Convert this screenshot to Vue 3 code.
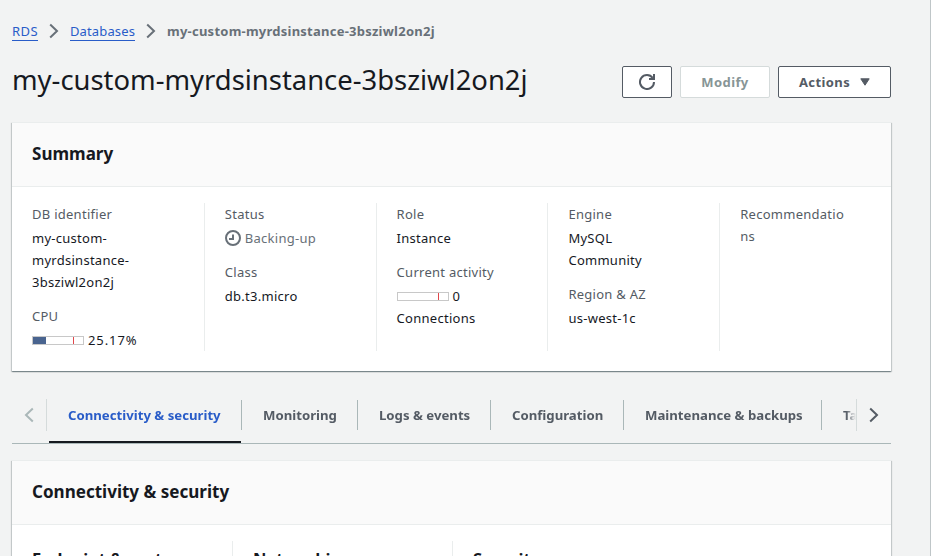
<script setup>
const instance = 'my-custom-myrdsinstance-3bsziwl2on2j'

const summary = [
  [
    { label: 'DB identifier', lines: ['my-custom-', 'myrdsinstance-', '3bsziwl2on2j'] },
    { label: 'CPU', meter: 26, lines: ['25.17%'], wide: true },
  ],
  [
    { label: 'Status', pending: true, lines: ['Backing-up'] },
    { label: 'Class', lines: ['db.t3.micro'] },
  ],
  [
    { label: 'Role', lines: ['Instance'] },
    { label: 'Current activity', meter: 0, lines: ['0', 'Connections'] },
  ],
  [
    { label: 'Engine', lines: ['MySQL', 'Community'] },
    { label: 'Region & AZ', lines: ['us-west-1c'] },
  ],
  [{ label: 'Recommendatio\nns', lines: [] }],
]

const tabs = [
  'Connectivity & security',
  'Monitoring',
  'Logs & events',
  'Configuration',
  'Maintenance & backups',
  'Tags',
]

const details = ['Endpoint & port', 'Networking', 'Security']
</script>

<template>
  <main class="page">
    <nav class="crumbs">
      <a class="link">RDS</a>
      <svg class="chevron" viewBox="0 0 10 16"><path d="M1.200 1.500 8 8l-6.800 6.500" /></svg>
      <a class="link">Databases</a>
      <svg class="chevron" viewBox="0 0 10 16"><path d="M1.200 1.500 8 8l-6.800 6.500" /></svg>
      <span class="current">{{ instance }}</span>
    </nav>

    <header class="heading">
      <h1>{{ instance }}</h1>
      <div class="actions">
        <button class="btn refresh" aria-label="Refresh">
          <svg viewBox="0 0 16 16" width="16" height="16">
            <path d="M10 5h5V0" />
            <path d="M15 8a7 7 0 1 1-1.300-4.060" />
          </svg>
        </button>
        <button class="btn modify" disabled>Modify</button>
        <button class="btn menu">
          Actions
          <svg viewBox="0 0 10 8" width="10" height="8"><path d="M.8.800h8.400L5 7.200z" /></svg>
        </button>
      </div>
    </header>

    <section class="box">
      <h2>Summary</h2>
      <div class="summary">
        <div v-for="(col, i) in summary" :key="i" class="col">
          <div v-for="item in col" :key="item.label" class="field">
            <div class="label">{{ item.label }}</div>
            <div v-if="item.lines.length" class="value" :class="{ pending: item.pending }">
              <div v-for="(line, n) in item.lines" :key="line" class="line" :class="{ wide: item.wide }">
                <svg v-if="item.pending" class="clock" viewBox="0 0 16 16" width="16" height="16">
                  <circle cx="8" cy="8" r="7" />
                  <path d="M8 4.500V9H4" />
                </svg>
                <span v-if="item.meter !== undefined && n === 0" class="meter">
                  <span class="fill" :style="{ width: item.meter + '%' }"></span>
                  <span class="limit"></span>
                </span>
                <span>{{ line }}</span>
              </div>
            </div>
          </div>
        </div>
      </div>
    </section>

    <div class="tabbar">
      <div class="scroll prev">
        <svg class="chevron" viewBox="0 0 10 16"><path d="M8.800 1.500 2 8l6.800 6.500" /></svg>
      </div>
      <div class="tabs">
        <div v-for="(tab, i) in tabs" :key="tab" class="tab" :class="{ active: i === 0 }">
          <span>{{ tab }}</span>
        </div>
      </div>
      <div class="scroll next">
        <svg class="chevron" viewBox="0 0 10 16"><path d="M1.200 1.500 8 8l-6.800 6.500" /></svg>
      </div>
    </div>

    <section class="box">
      <h2>Connectivity &amp; security</h2>
      <div class="details">
        <h3 v-for="d in details" :key="d">{{ d }}</h3>
      </div>
    </section>
  </main>
</template>

<style>
body {
  background: #fff;
  overflow: hidden;
}
</style>

<style scoped>
.page {
  box-sizing: border-box;
  width: 931px;
  height: 556px;
  overflow: hidden;
  padding: 20px 39px 0 12px;
  border-right: 1px solid #bfc6c8;
  background: #f2f3f3;
  color: #16191f;
  font: 13px/22px "Noto Sans", sans-serif;
  letter-spacing: 0.27px;
}
h1,
h2,
h3 {
  margin: 0;
  letter-spacing: 0;
}
svg {
  display: block;
  flex: none;
  fill: none;
  stroke: currentColor;
  stroke-width: 2;
}
.chevron {
  width: 10px;
  height: 16px;
}
.crumbs {
  display: flex;
  height: 22px;
  color: #687078;
  letter-spacing: 0;
}
.crumbs .chevron {
  margin: 3px 11px 0;
}
.link {
  box-sizing: border-box;
  height: 21px;
  border-bottom: 1px solid #295cc8;
  color: #295cc8;
  letter-spacing: 0.130px;
}
.link:first-child {
  width: 26px;
  letter-spacing: 0.4px;
}
.link:nth-of-type(2) {
  width: 65px;
}
.current {
  font-weight: 700;
  letter-spacing: 0.24px;
}
.heading {
  display: flex;
  justify-content: space-between;
  height: 61px;
  margin-top: 19px;
}
h1 {
  padding-top: 1px;
  font-size: 27.4px;
  font-weight: 400;
  line-height: 36px;
}
.actions {
  display: flex;
  gap: 8px;
  margin: 5px 0 0;
}
.btn {
  display: flex;
  align-items: center;
  justify-content: center;
  box-sizing: border-box;
  height: 32px;
  padding: 0;
  border: 1px solid #545b64;
  border-radius: 2px;
  background: #fff;
  color: #545b64;
  font: 700 13px/20px "Noto Sans", sans-serif;
  letter-spacing: 0.4px;
}
.refresh {
  width: 50px;
}
.modify {
  width: 90px;
  border-color: #d5dbdb;
  color: #879596;
}
.menu {
  gap: 10px;
  width: 113px;
}
.menu svg {
  fill: currentColor;
  stroke-width: 1;
  stroke-linejoin: round;
}
.box {
  width: 879px;
  border-top: 1px solid #eaeded;
  background: #fff;
  box-shadow:
    0 1px 1px 0 rgba(0, 28, 36, 0.3),
    1px 1px 1px 0 rgba(0, 28, 36, 0.15),
    -1px 1px 1px 0 rgba(0, 28, 36, 0.15);
}
h2 {
  box-sizing: border-box;
  height: 64px;
  padding: 21px 20px 0;
  border-bottom: 1px solid #eaeded;
  background: #fafafa;
  font-size: 17.05px;
  line-height: 20px;
}
.summary {
  display: grid;
  grid-template-columns: repeat(5, 1fr);
  padding: 16px 0 20px 20px;
}
.col {
  display: flex;
  flex-direction: column;
  gap: 12px;
  padding: 0 20px;
  border-left: 1px solid #eaeded;
  white-space: nowrap;
}
.col:first-child {
  padding-left: 0;
  border-left: 0;
}
.label {
  color: #545b64;
  white-space: pre-line;
}
.value {
  margin-top: 2px;
}
.pending {
  color: #687078;
}
.line {
  display: flex;
  gap: 4px;
  height: 22px;
}
.wide {
  letter-spacing: 0.9px;
}
.clock {
  margin-top: 3px;
}
.meter {
  display: flex;
  position: relative;
  box-sizing: border-box;
  width: 52px;
  height: 9px;
  margin-top: 7px;
  border: 1px solid #c8c8c8;
}
.fill {
  background: #49648f;
}
.limit {
  position: absolute;
  left: 40px;
  top: 0;
  width: 1px;
  height: 7px;
  background: #e0474c;
}
.tabbar {
  display: flex;
  box-sizing: border-box;
  width: 879px;
  height: 53px;
  margin: 20px 0 16px;
  border-bottom: 1px solid #aab7b8;
}
.scroll {
  display: flex;
  align-items: center;
  justify-content: center;
  box-sizing: border-box;
  flex: none;
  width: 35px;
  height: 32px;
  margin-top: 8px;
}
.prev {
  border-right: 1px solid #d5dbdb;
  color: #aab7b8;
}
.next {
  border-left: 1px solid #d5dbdb;
  color: #545b64;
}
.tabs {
  display: grid;
  grid-template-columns: 193px 116px 133px 133px 198px 70px;
  flex: 1;
  min-width: 0;
  padding-left: 2px;
  overflow: hidden;
  letter-spacing: 0;
  -webkit-mask-image: linear-gradient(to left, transparent, #000 10px);
  mask-image: linear-gradient(to left, transparent, #000 10px);
}
.tab {
  position: relative;
  height: 52px;
  color: #545b64;
  font-size: 13.2px;
  font-weight: 700;
  white-space: nowrap;
}
.tab span {
  display: block;
  box-sizing: border-box;
  height: 30px;
  margin-top: 9px;
  padding-left: 21px;
  border-right: 1px solid #aab7b8;
  line-height: 30px;
}
.active {
  color: #295cc8;
}
.active span {
  padding-left: 19px;
}
.active::after {
  content: "";
  position: absolute;
  right: 1px;
  bottom: 0;
  left: 0;
  height: 2px;
  background: #16191f;
}
.details {
  display: grid;
  grid-template-columns: 200px 220px 1fr;
  padding: 16px 20px;
}
h3 {
  height: 40px;
  padding: 7px 20px 0;
  border-left: 1px solid #eaeded;
  font-size: 16.5px;
}
h3:first-child {
  padding-left: 0;
  border-left: 0;
}
</style>
